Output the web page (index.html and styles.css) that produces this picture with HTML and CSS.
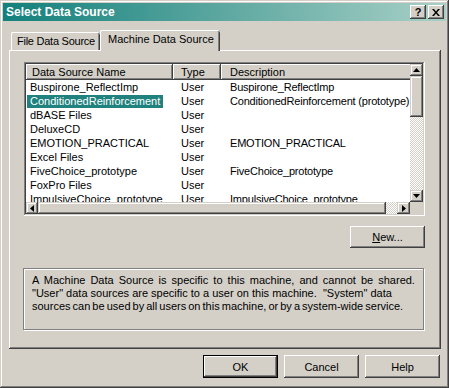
FILE: index.html
```html
<!DOCTYPE html>
<html>
<head>
<meta charset="utf-8">
<link rel="stylesheet" href="styles.css">
</head>
<body>
<div class="window">
  <div class="titlebar">
    <span class="title">Select Data Source</span>
    <div class="tb-btns">
      <div class="tb-btn q">?</div>
      <div class="tb-btn">
        <svg width="8" height="7" viewBox="0 0 8 7"><path d="M0 0h2l2 2.5L6 0h2L5 3.5 8 7H6L4 4.5 2 7H0l3-3.5z" fill="#000"/></svg>
      </div>
    </div>
  </div>
  <div class="main">
    <div class="tabs">
      <div class="tab file">File Data Source</div>
      <div class="tab active">Machine Data Source</div>
    </div>
    <div class="panel">
      <div class="listview">
        <div class="lv-content">
          <div class="lv-header">
            <div class="hcell c1">Data Source Name</div>
            <div class="hcell c2">Type</div>
            <div class="hcell c3">Description</div>
          </div>
          <div class="row"><span class="c1">Buspirone_ReflectImp</span><span class="c2">User</span><span class="c3">Buspirone_ReflectImp</span></div>
          <div class="row"><span class="c1"><span class="sel">ConditionedReinforcement</span></span><span class="c2">User</span><span class="c3">ConditionedReinforcement (prototype)</span></div>
          <div class="row"><span class="c1">dBASE Files</span><span class="c2">User</span><span class="c3"></span></div>
          <div class="row"><span class="c1">DeluxeCD</span><span class="c2">User</span><span class="c3"></span></div>
          <div class="row"><span class="c1">EMOTION_PRACTICAL</span><span class="c2">User</span><span class="c3">EMOTION_PRACTICAL</span></div>
          <div class="row"><span class="c1">Excel Files</span><span class="c2">User</span><span class="c3"></span></div>
          <div class="row"><span class="c1">FiveChoice_prototype</span><span class="c2">User</span><span class="c3">FiveChoice_prototype</span></div>
          <div class="row"><span class="c1">FoxPro Files</span><span class="c2">User</span><span class="c3"></span></div>
          <div class="row"><span class="c1">ImpulsiveChoice_prototype</span><span class="c2">User</span><span class="c3">ImpulsiveChoice_prototype</span></div>
        </div>
        <div class="vscroll">
          <div class="sbtn vb"><svg width="7" height="4" viewBox="0 0 7 4"><path d="M3.5 0L7 4H0z" fill="#000"/></svg></div>
          <div class="thumb vthumb"></div>
          <div class="track"></div>
          <div class="sbtn vb"><svg width="7" height="4" viewBox="0 0 7 4"><path d="M0 0h7L3.5 4z" fill="#000"/></svg></div>
        </div>
        <div class="hscroll">
          <div class="sbtn hb l"><svg width="4" height="7" viewBox="0 0 4 7"><path d="M0 3.5L4 0v7z" fill="#000"/></svg></div>
          <div class="thumb hthumb"></div>
          <div class="track"></div>
          <div class="sbtn hb r"><svg width="4" height="7" viewBox="0 0 4 7"><path d="M0 0l4 3.5L0 7z" fill="#000"/></svg></div>
        </div>
        <div class="corner"></div>
      </div>
      <div class="new-row">
        <div class="btn"><span><u>N</u>ew...</span></div>
      </div>
      <div class="groupbox">
        <div class="line l1">A Machine Data Source is specific to this machine, and cannot be shared.</div>
        <div class="line l2">"User" data sources are specific to a user on this machine.&nbsp; "System" data</div>
        <div class="line l3">sources can be used by all users on this machine, or by a system-wide service.</div>
      </div>
    </div>
    <div class="buttons">
      <div class="btn default">OK</div>
      <div class="btn">Cancel</div>
      <div class="btn">Help</div>
    </div>
  </div>
</div>
</body>
</html>
```

FILE: styles.css
```css
* { box-sizing: border-box; }
html, body { margin: 0; padding: 0; }
body {
  width: 449px;
  height: 388px;
  overflow: hidden;
  background: #d4d0c8;
  font-family: "Liberation Sans", Arial, sans-serif;
  font-size: 11px;
  color: #000;
}
.window {
  width: 449px;
  height: 388px;
  padding: 3px;
  background: #d4d0c8;
  display: flex;
  flex-direction: column;
  box-shadow: inset -1px -1px #404040, inset 1px 1px #d4d0c8, inset -2px -2px #808080, inset 2px 2px #fff;
}
.titlebar {
  height: 18px;
  flex: none;
  display: flex;
  align-items: center;
  justify-content: space-between;
  padding: 0 2px 0 3px;
  background: linear-gradient(to right, #13807c, #a8d0c6);
  color: #fff;
  font-weight: bold;
  font-size: 12px;
}
.tb-btns { display: flex; gap: 2px; }
.tb-btn {
  width: 16px;
  height: 14px;
  background: #d4d0c8;
  display: flex;
  align-items: center;
  justify-content: center;
  color: #000;
  font-size: 11px;
  font-weight: bold;
  box-shadow: inset -1px -1px #404040, inset 1px 1px #fff, inset -2px -2px #808080;
}
.main {
  flex: 1;
  padding: 9px 5px 0 6px;
  display: flex;
  flex-direction: column;
}
.tabs {
  height: 20px;
  display: flex;
  align-items: flex-end;
  padding-left: 2px;
  position: relative;
  z-index: 2;
}
.tab {
  height: 18px;
  display: flex;
  align-items: center;
  white-space: nowrap;
  letter-spacing: -0.25px;
  background: #d4d0c8;
  border-radius: 2px 2px 0 0;
  box-shadow: inset 1px 0 #fff, inset 0 1px #fff, inset -1px 0 #404040, inset -2px 0 #808080;
}
.tab.file { width: 89px; padding-left: 6px; }
.tab.active {
  width: 120px;
  height: 21px;
  margin-bottom: -1px;
  padding-left: 8px;
  padding-bottom: 3px;
  letter-spacing: 0;
}
.panel {
  width: 432px;
  height: 299px;
  flex: none;
  padding: 12px 0 0 15px;
  box-shadow: inset -1px -1px #404040, inset 1px 1px #fff, inset -2px -2px #808080;
  display: flex;
  flex-direction: column;
}
.listview {
  width: 401px;
  height: 154px;
  padding: 2px;
  background: #fff;
  display: grid;
  grid-template-columns: 384px 13px;
  grid-template-rows: 138px 12px;
  box-shadow: inset -1px -1px #fff, inset 1px 1px #808080, inset -2px -2px #d4d0c8, inset 2px 2px #404040;
}
.lv-content { overflow: hidden; }
.lv-header {
  display: grid;
  grid-template-columns: 147px 48px 260px;
  height: 16px;
}
.hcell {
  background: #d4d0c8;
  line-height: 16px;
  white-space: nowrap;
  box-shadow: inset -1px -1px #404040, inset 1px 1px #fff, inset -2px -2px #808080;
}
.hcell.c1 { padding-left: 6px; }
.hcell.c2 { padding-left: 8px; }
.hcell.c3 { padding-left: 9px; box-shadow: inset 0 -1px #404040, inset 1px 1px #fff, inset 0 -2px #808080; }
.row {
  display: grid;
  grid-template-columns: 147px 48px 260px;
  height: 14px;
  line-height: 14px;
  white-space: nowrap;
}
.row .c1 { padding-left: 4px; }
.row .c2 { padding-left: 8px; }
.row .c3 { padding-left: 9px; letter-spacing: -0.2px; }
.sel {
  background: #1f827e;
  color: #fff;
  margin-left: -3px;
  padding: 0 3px;
  display: inline-block;
  line-height: 13px;
}
.vscroll { display: flex; flex-direction: column; }
.hscroll { display: flex; }
.sbtn {
  background: #d4d0c8;
  display: flex;
  align-items: center;
  justify-content: center;
  box-shadow: inset -1px -1px #404040, inset 1px 1px #d4d0c8, inset -2px -2px #808080, inset 2px 2px #fff;
}
.sbtn.vb { height: 12px; flex: none; }
.sbtn.hb { width: 12px; flex: none; }
.sbtn.hb.r { width: 13px; }
.thumb {
  background: #d4d0c8;
  flex: none;
  box-shadow: inset -1px -1px #404040, inset 1px 1px #d4d0c8, inset -2px -2px #808080, inset 2px 2px #fff;
}
.vthumb { height: 41px; }
.hthumb { width: 348px; }
.track {
  flex: 1;
  background: repeating-conic-gradient(#fff 0 25%, #d4d0c8 0 50%) 0 0 / 2px 2px;
}
.corner { background: #d4d0c8; }
.new-row {
  width: 401px;
  margin-top: 10px;
  display: flex;
  justify-content: flex-end;
}
.btn {
  width: 75px;
  height: 23px;
  display: flex;
  align-items: center;
  justify-content: center;
  background: #d4d0c8;
  box-shadow: inset -1px -1px #404040, inset 1px 1px #fff, inset -2px -2px #808080;
}
.new-row .btn { height: 22px; }
.btn.default {
  box-shadow: inset 0 0 0 1px #000, inset -2px -2px #404040, inset 2px 2px #fff, inset -3px -3px #808080;
}
.groupbox {
  width: 401px;
  height: 62px;
  margin-top: 20px;
  margin-left: -1px;
  padding: 5px 0 0 8px;
  line-height: 13px;
  white-space: nowrap;
  border: 1px solid #808080;
  box-shadow: inset 1px 1px #fff, 1px 1px #fff;
}
.line.l1 { word-spacing: 2px; }
.line.l3 { word-spacing: -1px; }
.buttons {
  margin-top: 6px;
  padding-right: 1px;
  display: flex;
  justify-content: flex-end;
  gap: 6px;
}
```
